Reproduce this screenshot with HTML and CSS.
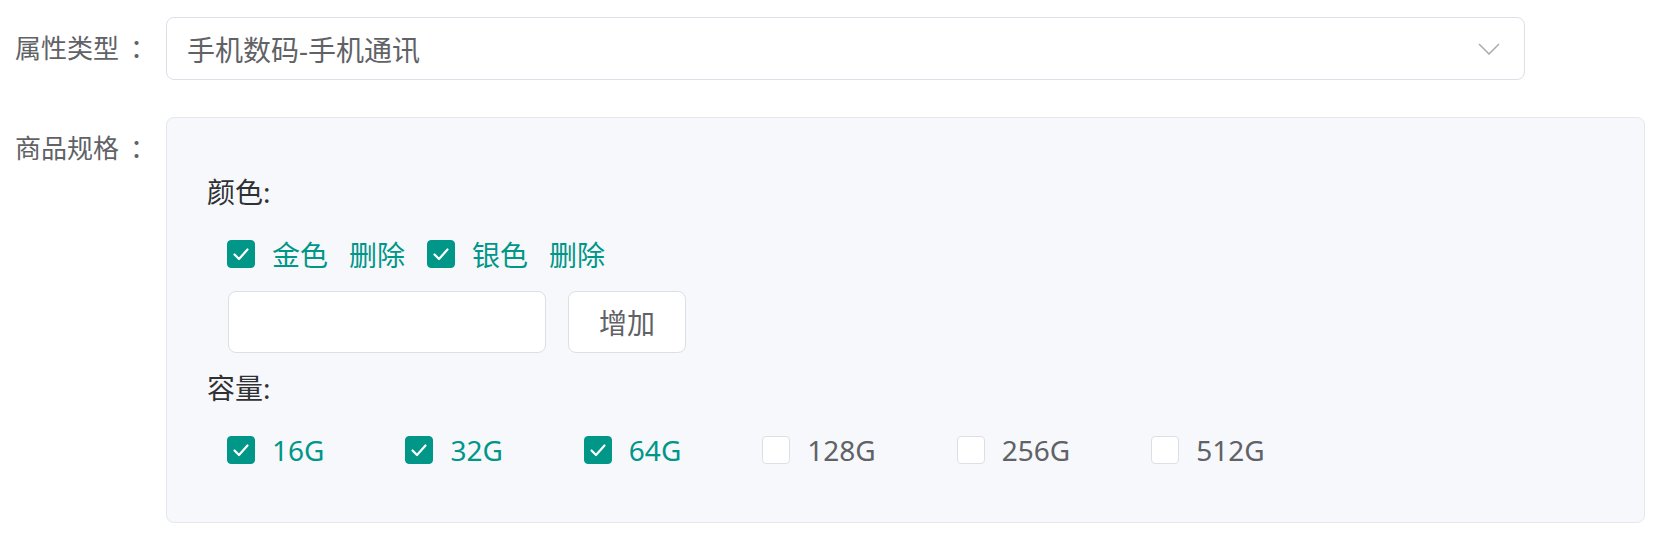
FILE: index.html
```html
<!DOCTYPE html>
<html lang="zh-CN">
<head>
<meta charset="utf-8">
<title>商品规格</title>
<link rel="stylesheet" href="styles.css">
</head>
<body>
<form class="form">
  <div class="form-item">
    <label class="form-label">属性类型<span class="colon">：</span></label>
    <div class="select">
      <span class="select-value">手机数码-手机通讯</span>
      <svg class="select-arrow" width="22" height="12" viewBox="0 0 22 12"><polyline points="1,1 11,11 21,1" fill="none" stroke="#a8abb2" stroke-width="1.5"/></svg>
    </div>
  </div>
  <div class="form-item spec-item">
    <label class="form-label">商品规格<span class="colon">：</span></label>
    <div class="spec-panel">
      <div class="spec-group">
        <div class="spec-title">颜色:</div>
        <div class="spec-options">
          <label class="check is-checked"><span class="check-box"><svg width="28" height="28" viewBox="0 0 28 28"><polyline points="7.5,14.5 12,19 20.5,9.5" fill="none" stroke="#fff" stroke-width="2.2" stroke-linecap="round" stroke-linejoin="round"/></svg></span><span class="check-text">金色</span></label>
          <a class="del-link">删除</a>
          <label class="check is-checked"><span class="check-box"><svg width="28" height="28" viewBox="0 0 28 28"><polyline points="7.5,14.5 12,19 20.5,9.5" fill="none" stroke="#fff" stroke-width="2.2" stroke-linecap="round" stroke-linejoin="round"/></svg></span><span class="check-text">银色</span></label>
          <a class="del-link">删除</a>
        </div>
        <div class="spec-add">
          <input class="spec-input" type="text">
          <button class="btn" type="button">增加</button>
        </div>
      </div>
      <div class="spec-group group-cap">
        <div class="spec-title">容量:</div>
        <div class="spec-options">
          <label class="check cap is-checked"><span class="check-box"><svg width="28" height="28" viewBox="0 0 28 28"><polyline points="7.5,14.5 12,19 20.5,9.5" fill="none" stroke="#fff" stroke-width="2.2" stroke-linecap="round" stroke-linejoin="round"/></svg></span><span class="check-text">16G</span></label>
          <label class="check cap is-checked"><span class="check-box"><svg width="28" height="28" viewBox="0 0 28 28"><polyline points="7.5,14.5 12,19 20.5,9.5" fill="none" stroke="#fff" stroke-width="2.2" stroke-linecap="round" stroke-linejoin="round"/></svg></span><span class="check-text">32G</span></label>
          <label class="check cap is-checked"><span class="check-box"><svg width="28" height="28" viewBox="0 0 28 28"><polyline points="7.5,14.5 12,19 20.5,9.5" fill="none" stroke="#fff" stroke-width="2.2" stroke-linecap="round" stroke-linejoin="round"/></svg></span><span class="check-text">64G</span></label>
          <label class="check cap"><span class="check-box"></span><span class="check-text">128G</span></label>
          <label class="check cap"><span class="check-box"></span><span class="check-text">256G</span></label>
          <label class="check cap"><span class="check-box"></span><span class="check-text">512G</span></label>
        </div>
      </div>
    </div>
  </div>
</form>
</body>
</html>
```
FILE: styles.css
```css
* { box-sizing: border-box; }
html, body { margin: 0; padding: 0; background: #fff; }
body {
  font-family: "Noto Sans", "Noto Sans CJK SC", sans-serif;
  color: #606266;
}
.form {
  padding: 17px 0 0 15px;
  margin: 0;
}
.form-item {
  display: flex;
  align-items: flex-start;
}
.form-label {
  width: 151px;
  flex: none;
  font-size: 26px;
  line-height: 63px;
  height: 63px;
  color: #606266;
  white-space: nowrap;
}
.colon { margin-left: 11px; }
.select {
  width: 1359px;
  height: 63px;
  border: 1px solid #dcdfe6;
  border-radius: 8px;
  background: #fff;
  display: flex;
  align-items: center;
  justify-content: space-between;
  padding: 0 24px 0 20px;
}
.select-value {
  font-size: 28px;
  color: #606266;
}
.select-arrow { display: block; }
.spec-item { margin-top: 37px; }
.spec-panel {
  width: 1479px;
  border: 1px solid #e4e7ed;
  border-radius: 8px;
  background: #f7f8fc;
  padding: 54px 40px 52px;
}
.spec-title {
  font-size: 28px;
  line-height: 40px;
  color: #303133;
}
.spec-options {
  margin-top: 22px;
  height: 40px;
  display: flex;
  align-items: center;
  padding-left: 20px;
}
.check {
  display: flex;
  align-items: center;
  font-size: 28px;
  color: #606266;
}
.check-box {
  width: 28px;
  height: 28px;
  border: 1px solid #dcdfe6;
  border-radius: 4px;
  background: #fff;
  margin-right: 17px;
  position: relative;
  flex: none;
}
.check-box svg {
  position: absolute;
  left: -1px;
  top: -1px;
}
.check.is-checked .check-box {
  background: #009688;
  border-color: #009688;
}
.check.is-checked .check-text { color: #009688; }
.del-link {
  font-size: 28px;
  color: #009688;
  margin: 0 22px 0 21px;
}
.check.cap { margin-right: 81px; }
.spec-add {
  margin-top: 17px;
  display: flex;
  padding-left: 21px;
  gap: 22px;
}
.spec-input {
  width: 318px;
  height: 62px;
  border: 1px solid #dcdfe6;
  border-radius: 8px;
  background: #fff;
  font-size: 26px;
  padding: 0 14px;
  outline: none;
}
.btn {
  width: 118px;
  height: 62px;
  border: 1px solid #dcdfe6;
  border-radius: 8px;
  background: #fff;
  font-family: inherit;
  font-size: 28px;
  color: #606266;
  padding: 0;
}
.group-cap { margin-top: 15px; }
```
